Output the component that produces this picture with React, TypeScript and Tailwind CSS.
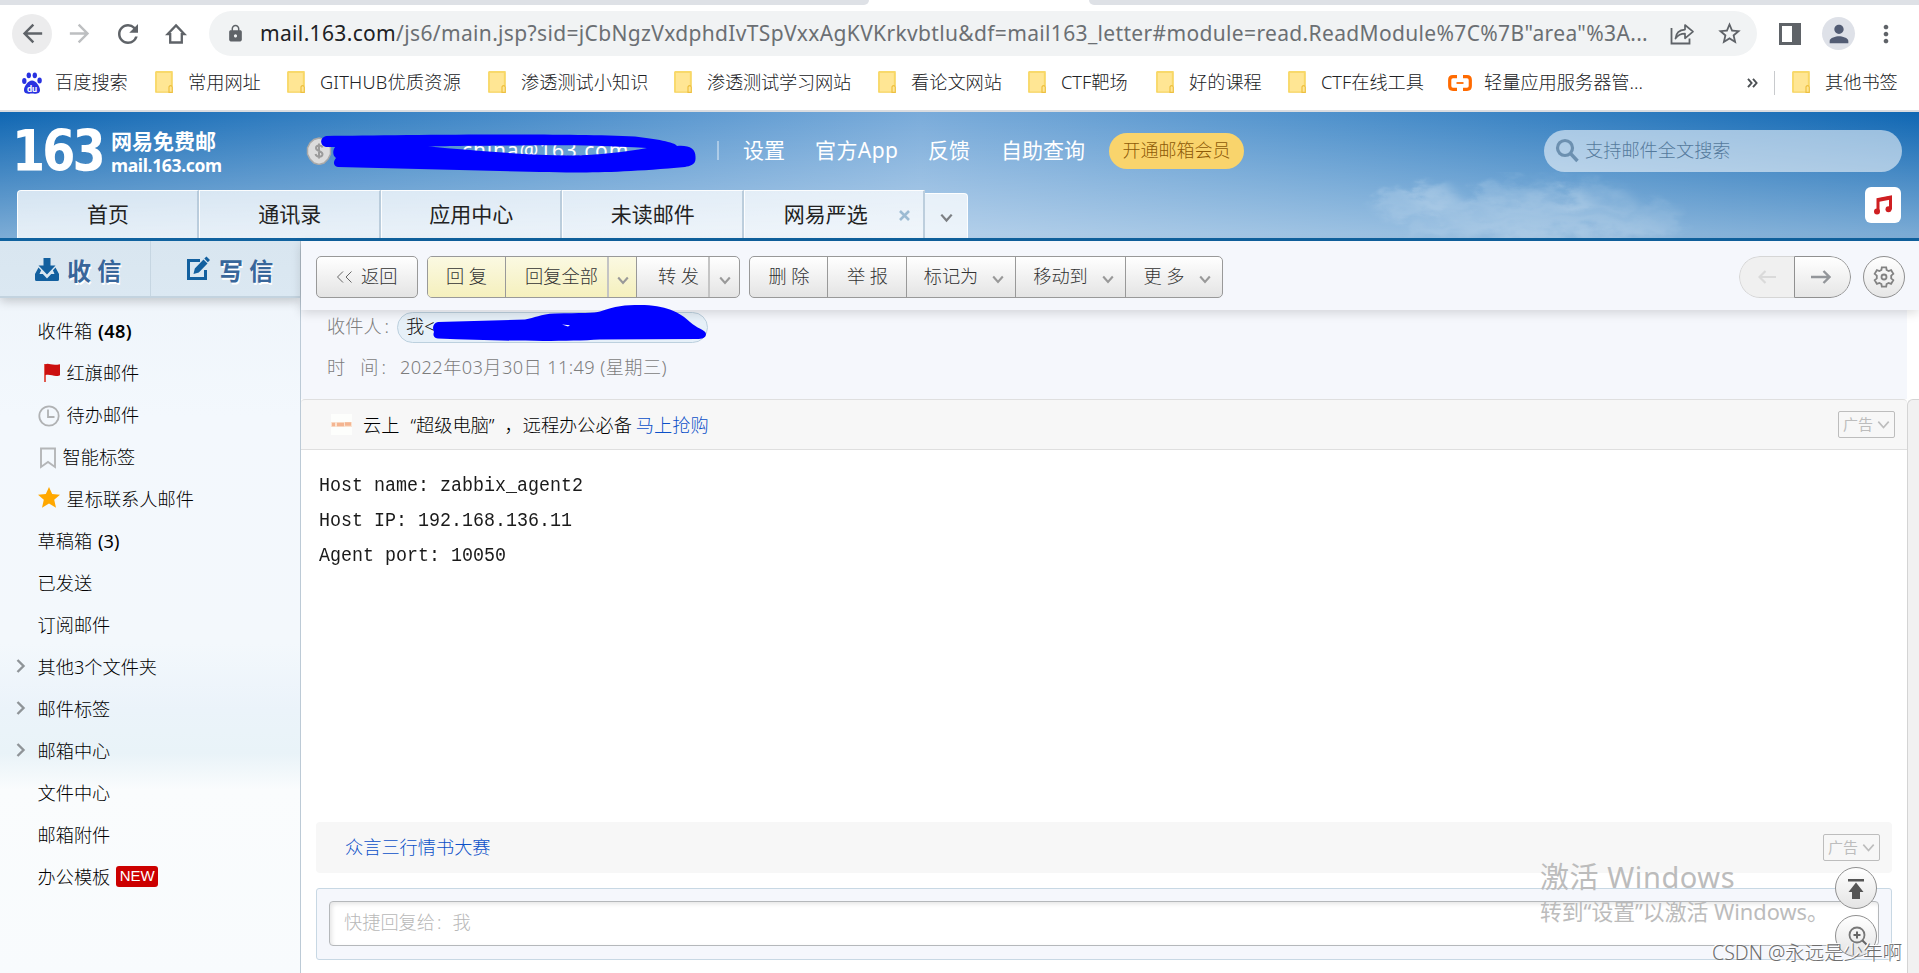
import React from "react";
import { MdArrowBack, MdArrowForward, MdRefresh, MdLock, MdStarBorder, MdPerson, MdMoreVert } from "react-icons/md";

const ui = "font-['Noto_Sans','Noto_Sans_CJK_SC',sans-serif]";

function Folder() {
  return (
    <svg width="18" height="22" viewBox="0 0 18 22" className="shrink-0">
      <path d="M1 1h16v14M1 1v20h13" fill="#ffe694" stroke="#f6d155" strokeWidth="1.4" />
      <path d="M1.5 1.5h15v19h-15z" fill="#ffe694" />
      <path d="M1 21V1h15.500v14" fill="none" stroke="#f8d866" strokeWidth="1.300" />
      <path d="M14 21.3v-5.5q1.6-2.4 3.3 0v5.5z" fill="#ffe694" stroke="#eec040" strokeWidth="1.2" />
    </svg>
  );
}

function Bookmark({ label, w, gap, track = "" }: { label: string; w: string; gap: string; track?: string }) {
  return (
    <div className={`flex shrink-0 items-center ${gap}`}>
      <Folder />
      <span className={`ml-[15px] whitespace-nowrap ${w} ${track}`}>{label}</span>
    </div>
  );
}

function Chevron({ className = "", color = "#999", size = 12, sw = 2.1 }: { className?: string; color?: string; size?: number; sw?: number }) {
  return (
    <svg width={size} height={size * 0.75} viewBox="0 0 12 9" className={`shrink-0 ${className}`}>
      <path d="M1.200 1.500l4.800 5.500 4.800-5.500" fill="none" stroke={color} strokeWidth={sw} />
    </svg>
  );
}

function BrowserBar() {
  return (
    <div className="h-[51px] flex items-center bg-white text-[#5f6368]">
      <div className="ml-3 flex h-10 w-10 shrink-0 items-center justify-center rounded-full bg-[#ececed]">
        <MdArrowBack size={29} />
      </div>
      <MdArrowForward size={29} className="ml-[13px] shrink-0 text-[#bdbfc1]" />
      <MdRefresh size={30} className="ml-[19px] shrink-0" />
      <svg width="22" height="22" viewBox="0 0 22 22" className="ml-[22px] shrink-0">
        <path d="M11 2.4l8.4 8.800h-2.600v8.300H5.200v-8.300H2.600z" fill="none" stroke="#5f6368" strokeWidth="2.300" />
      </svg>
      <div className="ml-[22px] flex h-[45px] w-[1548px] shrink-0 items-center rounded-full bg-[#f1f3f4]">
        <MdLock size={19} className="ml-[17px] shrink-0" />
        <span className="ml-[15px] w-[1388px] shrink-0 whitespace-nowrap text-[21px] font-normal tracking-[0.345px] text-[#6b6f73]">
          <span className="text-[#202124]">mail.163.com</span>
          {'/js6/main.jsp?sid=jCbNgzVxdphdIvTSpVxxAgKVKrkvbtlu&df=mail163_letter#module=read.ReadModule%7C%7B"area"%3A...'}
        </span>
        <svg width="26" height="24" viewBox="0 0 26 24" className="ml-[21px] shrink-0">
          <path d="M2.500 6v15.500h18v-5" fill="none" stroke="#5f6368" strokeWidth="1.800" />
          <path d="M6.500 16.500c.5-6 4-8.500 9.500-8.900V3l8 6.600-8 6.700v-4.600c-4.500 0-7 1.300-9.500 4.800z" fill="none" stroke="#5f6368" strokeWidth="1.700" strokeLinejoin="round" />
        </svg>
        <MdStarBorder size={27} className="ml-[21px] shrink-0" />
      </div>
      <svg width="22" height="22" viewBox="0 0 22 22" className="ml-[22px] shrink-0">
        <path d="M0 0h22v22H0zM3 3v16h10V3z" fill="#5f6368" fillRule="evenodd" />
      </svg>
      <div className="ml-[21px] flex h-[33px] w-[33px] shrink-0 items-center justify-center rounded-full bg-[#dee1e8] text-[#525c74]">
        <MdPerson size={28} />
      </div>
      <MdMoreVert size={28} className="ml-[17px] shrink-0" />
    </div>
  );
}

function BookmarksBar() {
  return (
    <div className="flex h-[54px] items-center border-b-2 border-[#dadce0] bg-white pb-[3px] text-[18.200px] text-[#202124]">
      <svg width="20" height="22" viewBox="0 0 20 22" className="ml-[22px] shrink-0">
        <g fill="#2932e1">
          <ellipse cx="2.300" cy="9" rx="2.200" ry="2.900" />
          <ellipse cx="6.800" cy="3.300" rx="2.200" ry="2.900" />
          <ellipse cx="12.800" cy="3.300" rx="2.200" ry="2.900" />
          <ellipse cx="17.600" cy="8.500" rx="2.200" ry="2.900" />
          <path d="M10 8.500c4 0 8 6 8 9.500s-3 4-8 3.600c-5 .4-8-.1-8-3.600s4-9.500 8-9.500z" />
        </g>
        <text x="10" y="19.500" textAnchor="middle" fontSize="9" fontWeight="700" fill="#fff" fontFamily="Roboto, sans-serif">du</text>
      </svg>
      <span className="ml-[13px] w-[73px] shrink-0 whitespace-nowrap">百度搜索</span>
      <Bookmark gap="ml-[27px]" w="w-[73px]" label="常用网址" />
      <Bookmark gap="ml-[26px]" w="w-[142px]" label="GITHUB优质资源" track="tracking-[0.2px]" />
      <Bookmark gap="ml-[26px]" w="w-[127px]" label="渗透测试小知识" />
      <Bookmark gap="ml-[26px]" w="w-[144px]" label="渗透测试学习网站" track="tracking-[-0.2px]" />
      <Bookmark gap="ml-[27px]" w="w-[90px]" label="看论文网站" />
      <Bookmark gap="ml-[27px]" w="w-[68px]" label="CTF靶场" />
      <Bookmark gap="ml-[27px]" w="w-[73px]" label="好的课程" />
      <Bookmark gap="ml-[26px]" w="w-[104px]" label="CTF在线工具" />
      <svg width="24" height="16" viewBox="0 0 24 16" className="ml-[23px] shrink-0">
        <path d="M9 1.700H5Q1.700 1.700 1.700 5v6q0 3.300 3.300 3.300h4M15 1.700h4q3.300 0 3.300 3.300v6q0 3.300-3.300 3.300h-4" fill="none" stroke="#ff6a00" strokeWidth="3.200" />
        <path d="M8.500 8h7" stroke="#ff6a00" strokeWidth="1.800" />
      </svg>
      <span className="ml-[12px] w-[161px] shrink-0 whitespace-nowrap">轻量应用服务器管...</span>
      <svg width="11" height="10" viewBox="0 0 11 10" className="ml-[102px] shrink-0">
        <path d="M1 .800l3.600 4.200L1 9.200M6 .800l3.600 4.200L6 9.200" fill="none" stroke="#4b4f53" strokeWidth="1.900" />
      </svg>
      <div className="ml-[16px] h-6 w-px bg-[#c8cacd]" />
      <Bookmark gap="ml-[17px]" w="w-[73px]" label="其他书签" />
    </div>
  );
}

function Clouds() {
  return (
    <svg width="580" height="90" viewBox="-40 0 580 90" className="absolute right-0 bottom-0">
      <defs>
        <filter id="cloud" x="-20%" y="-20%" width="140%" height="140%">
          <feGaussianBlur stdDeviation="5" result="b" />
          <feTurbulence type="fractalNoise" baseFrequency="0.03 0.06" numOctaves="4" seed="8" result="n" />
          <feDisplacementMap in="b" in2="n" scale="38" />
        </filter>
      </defs>
      <g fill="#fff" filter="url(#cloud)">
        <ellipse cx="45" cy="58" rx="50" ry="12" opacity=".17" />
        <ellipse cx="55" cy="48" rx="24" ry="12" opacity=".15" />
        <ellipse cx="150" cy="52" rx="62" ry="16" opacity=".15" />
        <ellipse cx="185" cy="68" rx="120" ry="17" opacity=".12" />
        <ellipse cx="165" cy="82" rx="140" ry="12" opacity=".13" />
        <ellipse cx="215" cy="50" rx="40" ry="14" opacity=".11" />
      </g>
    </svg>
  );
}

function Tab({ label, first = false, close = false }: { label: string; first?: boolean; close?: boolean }) {
  return (
    <div className={`relative flex h-12 shrink-0 items-center justify-center border-t border-l border-white/90 border-r-2 border-r-[#a9bfd0]/70 bg-linear-to-b from-white/75 to-white/80 ${first ? "w-[182px] rounded-tl" : "w-[181.500px]"}`}>
      <span className={close ? "mr-4" : "ml-px"}>{label}</span>
      {close && (
        <svg width="11" height="11" viewBox="0 0 11 11" className="absolute right-[13px] top-[19px]">
          <path d="M1 1l9 9M10 1l-9 9" stroke="#9cbbd3" strokeWidth="2.600" />
        </svg>
      )}
    </div>
  );
}

function Header() {
  return (
    <header className="relative flex h-[129px] flex-col justify-between border-b-[3px] border-[#10629f] bg-[linear-gradient(to_bottom,rgba(255,255,255,0),rgba(255,255,255,0.46)),linear-gradient(to_right,#1067b3,#4389c8_25%,#79abda_48%,#4d90cb_70%,#1067b3)] font-normal">
      <Clouds />
      <div className="relative flex h-[78px] items-center pt-[2px] text-[21px] text-white">
        <span className="ml-3 w-[92px] shrink-0 origin-left scale-x-[0.93] font-['DejaVu_Sans_Condensed','DejaVu_Sans',sans-serif] text-[57px] leading-[60px] font-bold tracking-[-0.055em]">163</span>
        <div className="ml-[7px] w-[112px] shrink-0 pt-1">
          <div className="text-[21px] leading-[25px] font-bold whitespace-nowrap">网易免费邮</div>
          <div className="text-[17.500px] leading-[22px] font-bold whitespace-nowrap tracking-[-0.02em]">mail.163.com</div>
        </div>
        <svg width="26" height="28" viewBox="0 0 26 28" className="ml-[83px] shrink-0">
          <path d="M13 1l5 1.500 4 3.500 2.500 5v6l-2.500 5-4 4-5 1.500L8 26l-4-4-2.500-5v-6L4 6l4-3.500z" fill="#dcdcdc" stroke="#a9a9a9" strokeWidth="1.500" />
          <path d="M16.500 10.500C16 8 10 7.500 10 11s6.500 2.800 6.500 6.200-6 3.300-7-.2M13 6.500v15" fill="none" stroke="#9b9b9b" strokeWidth="2" />
        </svg>
        <span className="ml-[130px] w-[255px] shrink-0 whitespace-nowrap tracking-[0.04em]">china@163.com</span>
        <div className="h-[19px] w-[2px] shrink-0 bg-white/40" />
        <span className="ml-6 w-[72px] shrink-0 whitespace-nowrap">设置</span>
        <span className="w-[113px] shrink-0 whitespace-nowrap tracking-[0.02em]">官方App</span>
        <span className="w-[73px] shrink-0">反馈</span>
        <span className="w-[108px] shrink-0 whitespace-nowrap">自助查询</span>
        <div className="flex h-9 w-[135px] shrink-0 items-center justify-center rounded-full bg-[#f9d46c] text-[18px] font-light text-[#8e5a08]">开通邮箱会员</div>
        <div className="ml-[300px] flex h-[42px] w-[358px] shrink-0 items-center rounded-full bg-white/55 text-[18.200px] font-light text-[#557a9c]">
          <svg width="25" height="25" viewBox="0 0 25 25" className="ml-[11px] shrink-0">
            <circle cx="10" cy="10" r="7.500" fill="none" stroke="#6c90b0" strokeWidth="3.200" />
            <path d="M15.500 15.500l7 7.500" stroke="#6c90b0" strokeWidth="3.400" />
          </svg>
          <span className="ml-[5px] whitespace-nowrap">支持邮件全文搜索</span>
        </div>
        <svg width="378" height="42" viewBox="319 133 378 42" className="absolute left-[319px] top-[21px]">
          <path fillRule="evenodd" fill="#0000ff" d="M326 136C400 135 560 133 635 136.500C655 139 675 142 677 146C690 145 696 149 695.500 158C696 165 690 166 685 167C620 173 580 173 540 172L338 167C333 166 333 162 336 158C332 155 333 150 335 147L326 147C320 146 319 138 326 136ZM428 146.500C470 150 520 155 570 155.500C600 155 625 152 647 148C600 145.500 570 145 520 145.500C490 145.500 450 146 428 146.500Z" />
        </svg>
      </div>
      <div className="relative flex items-end text-[21px] text-[#222]">
        <div className="w-[17px] shrink-0" />
        <Tab label="首页" first />
        <Tab label="通讯录" />
        <Tab label="应用中心" />
        <Tab label="未读邮件" />
        <Tab label="网易严选" close />
        <div className="flex h-[45px] w-[43px] items-center justify-center rounded-tr border-t border-r border-white/90 bg-white/75">
          <Chevron size={13} color="#7c7f83" className="mt-1" />
        </div>
        <div className="mr-[18px] mb-[15px] ml-auto flex h-9 w-9 items-center justify-center rounded-md bg-white">
          <svg width="20" height="20" viewBox="0 0 20 20">
            <path d="M5 16.500V4.500L17.500 2v12.500" fill="none" stroke="#cf1f22" strokeWidth="3" />
            <path d="M5 3.500l13-2.500v3.500L5 7z" fill="#cf1f22" />
            <circle cx="4" cy="16.500" r="3" fill="#cf1f22" />
            <circle cx="15.500" cy="14.300" r="3" fill="#cf1f22" />
          </svg>
        </div>
      </div>
    </header>
  );
}

function FolderRow({ label, icon, pad = "", arrow = false, children }: { label?: string; icon?: React.ReactNode; pad?: string; arrow?: boolean; children?: React.ReactNode }) {
  return (
    <li className="flex h-[42.050px] items-center whitespace-nowrap">
      <span className="flex w-[37.500px] shrink-0 items-center pl-4">
        {arrow && (
          <svg width="10" height="14" viewBox="0 0 10 14" className="-mt-1">
            <path d="M1.500 1l6 6-6 6" fill="none" stroke="#8f9498" strokeWidth="2.400" />
          </svg>
        )}
      </span>
      {icon}
      <span className={pad}>{label}</span>
      {children}
    </li>
  );
}

function Sidebar() {
  return (
    <aside className="flex w-[301px] shrink-0 flex-col border-r border-[#bccad6] bg-[linear-gradient(to_bottom,#eef4fa,#f3f8fd_24%,#f3f8fc_55%,#ebf3fa_64%,#e9f3f8_70%,#fafcfd_75%,#f8fbfd)]">
      <div className="flex h-[57px] shrink-0 border-b-2 border-[#c3d3df] bg-linear-to-b from-[#d9e6f0] to-[#dbe8f2] text-[24px] font-bold text-[#38669a] shadow-[0_3px_10px_rgba(0,0,0,0.2)] [text-shadow:1px_2px_0_#fff]">
        <div className="flex w-[151px] items-center border-r border-[#c6d6e2] pt-1">
          <svg width="26" height="24" viewBox="0 0 26 24" className="-mt-0.5 ml-[34px] shrink-0">
            <path d="M9.500 0h7v7.500h5L13 16.500 4.500 7.500h5z" fill="#13609f" />
            <path d="M4.500 9.500L1 16v5.500Q1 23 2.500 23h21q1.500 0 1.500-1.500V16l-3.500-6.500-2.600 2.700 1.600 3.800h-3.300L13 20.500 8.800 16H5.500l1.600-3.800z" fill="#13609f" />
          </svg>
          <span className="ml-[7px] whitespace-nowrap">收 信</span>
        </div>
        <div className="flex items-center pt-1">
          <svg width="24" height="25" viewBox="0 0 24 25" className="ml-[35px] -mt-1 shrink-0">
            <path d="M14 4.500H2.500v18h17V14" fill="none" stroke="#13609f" strokeWidth="3" />
            <path d="M7.500 18l1.300-5.500L17.500 3.500l4 4-8.700 9zM18.300 2.600L20.500.500l3.500 3.600-2.200 2.200z" fill="#13609f" />
          </svg>
          <span className="ml-[9px] whitespace-nowrap">写 信</span>
        </div>
      </div>
      <ul className="pt-[12.500px] text-[18.200px] text-black">
        <FolderRow label="收件箱"><b className="ml-[6px] font-semibold tracking-[0.02em]">(48)</b></FolderRow>
        <FolderRow label="红旗邮件" pad="ml-[7px]" icon={
          <svg width="22" height="20" viewBox="0 0 22 20" className="mt-[-2px]">
            <path d="M6 1h2v18H6z" fill="#e05a50" />
            <path d="M7 1.500c4-2 6 1.500 15-.3v11c-6 2.500-9-1.700-15 0z" fill="#cc1010" />
          </svg>} />
        <FolderRow label="待办邮件" pad="ml-[7px]" icon={
          <svg width="22" height="22" viewBox="0 0 22 22">
            <circle cx="11" cy="11" r="9.700" fill="none" stroke="#b0b2b4" strokeWidth="1.800" />
            <path d="M10 4.500V12h6.500" fill="none" stroke="#b0b2b4" strokeWidth="1.800" />
          </svg>} />
        <FolderRow label="智能标签" pad="ml-[7px]" icon={
          <svg width="18" height="22" viewBox="0 0 18 22">
            <path d="M3 1.500h14V20l-7-5-7 5z" fill="none" stroke="#b4b6b8" strokeWidth="1.900" />
          </svg>} />
        <FolderRow label="星标联系人邮件" pad="ml-[7px]" icon={
          <svg width="22" height="21" viewBox="0 0 22 21" className="-mt-1">
            <path d="M11 0l3.200 7 7.800.800-5.800 5 1.800 8-7-4.200-7 4.200 1.800-8L0 7.800 7.800 7z" fill="#ffa800" />
          </svg>} />
        <FolderRow label="草稿箱"><span className="ml-[6px] font-normal">(3)</span></FolderRow>
        <FolderRow label="已发送" />
        <FolderRow label="订阅邮件" />
        <FolderRow label="其他3个文件夹" arrow />
        <FolderRow label="邮件标签" arrow />
        <FolderRow label="邮箱中心" arrow />
        <FolderRow label="文件中心" />
        <FolderRow label="邮箱附件" />
        <FolderRow label="办公模板">
          <span className="ml-[6px] -mt-1 flex h-[21px] w-[42px] items-center justify-center rounded-[3px] bg-[#cc0000] font-['Liberation_Sans',sans-serif] text-[15px] text-white">NEW</span>
        </FolderRow>
      </ul>
    </aside>
  );
}

function Btn({ label, w, yellow = false, sep = true, className = "", arrow = false }: { label: string; w: string; yellow?: boolean; sep?: boolean; className?: string; arrow?: boolean }) {
  return (
    <div className={`flex shrink-0 items-center justify-center whitespace-nowrap ${w} ${sep ? "border-r border-[#999]" : ""} ${yellow ? "bg-linear-to-b from-[#fbf9e2] to-[#f5f0bd]" : ""} ${className}`}>
      {label}
      {arrow && <Chevron className="mt-1 ml-[14px]" />}
    </div>
  );
}

function Split({ w, yellow = false, sep = true }: { w: string; yellow?: boolean; sep?: boolean }) {
  return (
    <div className={`flex shrink-0 items-center justify-center border-l-2 border-l-[#c4c4c4] ${w} ${sep ? "border-r border-r-[#999]" : ""} ${yellow ? "bg-linear-to-b from-[#fbf9e2] to-[#f5f0bd]" : ""}`}>
      <Chevron className="mt-[6px]" />
    </div>
  );
}

const group = "flex h-[42px] shrink-0 overflow-hidden rounded-[5px] border border-[#999] bg-linear-to-b from-white to-[#e4e4e4]";

function Toolbar() {
  return (
    <div className="relative flex h-[69px] shrink-0 items-start bg-[#f5f7fc] pt-[15px] text-[18.200px] text-[#333] shadow-[0_3px_10px_rgba(0,0,0,0.14)]">
      <div className={`${group} ml-[15px] w-[102px] items-center`}>
        <svg width="17" height="12" viewBox="0 0 17 12" className="ml-[19px]">
          <path d="M7 .500L1.500 6 7 11.500M15.500.500L10 6l5.500 5.500" fill="none" stroke="#666" strokeWidth="1" />
        </svg>
        <span className="ml-2">返回</span>
      </div>
      <div className={`${group} ml-[9px] w-[313px]`}>
        <Btn label="回 复" w="w-[78px]" yellow />
        <Btn label="回复全部" w="w-[101px]" yellow sep={false} className="pl-2.5" />
        <Split w="w-[30px]" yellow />
        <Btn label="转 发" w="w-[71px]" sep={false} className="pl-3" />
        <Split w="w-[31px]" sep={false} />
      </div>
      <div className={`${group} ml-[9px] w-[474px]`}>
        <Btn label="删 除" w="w-[78px]" className="pl-px" />
        <Btn label="举 报" w="w-[79px]" className="pl-px" />
        <Btn label="标记为" w="w-[109px]" arrow className="pl-1.5" />
        <Btn label="移动到" w="w-[110px]" arrow className="pl-1.5" />
        <Btn label="更 多" w="w-[96px]" arrow sep={false} className="pl-1.5" />
      </div>
      <div className="ml-auto flex h-[42px] w-[112px] overflow-hidden rounded-full">
        <div className="flex w-[55px] items-center justify-center rounded-l-full border border-r-0 border-[#d6d6d6] bg-[#f0f0f0]">
          <svg width="18" height="14" viewBox="0 0 18 14"><path d="M18 7H2M7.500 1l-6 6 6 6" fill="none" stroke="#dadada" strokeWidth="2.200" /></svg>
        </div>
        <div className="flex w-[57px] items-center justify-center rounded-r-full border border-[#909090] bg-linear-to-b from-white to-[#e6e6e6]">
          <svg width="20" height="14" viewBox="0 0 20 14" className="mr-[3px]"><path d="M0 7h18M12.500 1l6 6-6 6" fill="none" stroke="#93969a" strokeWidth="2.400" /></svg>
        </div>
      </div>
      <div className="mr-[14px] ml-3 flex h-[42px] w-[42px] items-center justify-center rounded-full border border-[#909090] bg-linear-to-b from-white to-[#e6e6e6]">
        <svg width="22" height="22" viewBox="0 0 22 22">
          <path d="M8.800 1.300h4.400l.4 2.700 2 1.100 2.500-1 2.200 3.800-2.100 1.700v2.800l2.100 1.700-2.200 3.800-2.500-1-2 1.100-.4 2.700H8.800L8.400 18l-2-1.100-2.500 1-2.200-3.800 2.100-1.700V9.600L1.700 7.900l2.200-3.800 2.500 1 2-1.100z" fill="none" stroke="#828282" strokeWidth="1.800" />
          <circle cx="11" cy="11" r="2.500" fill="none" stroke="#828282" strokeWidth="1.800" />
        </svg>
      </div>
    </div>
  );
}

function AdBadge({ className = "" }: { className?: string }) {
  return (
    <div className={`ml-auto flex h-[27px] w-[57px] items-center rounded-[2px] border-[1.500px] border-[#bdbdbd] pl-1 text-[15px] font-normal text-[#bdbdbd] ${className}`}>
      <span className="whitespace-nowrap">广告</span>
      <Chevron size={13} sw={1.500} color="#bdbdbd" className="ml-1" />
    </div>
  );
}

function Mail() {
  return (
    <div className="flex min-h-0 flex-1">
      <div className="flex w-[1606px] shrink-0 flex-col bg-white">
        <div className="h-[89px] shrink-0 bg-[#f5f7fc] text-[18.200px] text-[#7d7d7d]">
          <div className="flex h-[34px] items-center pl-[26px]">
            <span className="w-[70px] whitespace-nowrap">收件人<span className="ml-[3px]">:</span></span>
            <div className="flex h-[31px] w-[311px] items-center rounded-full border border-[#bcd0de] bg-[#e6f0f8] pl-[8px] text-[#111]">我&lt;</div>
          </div>
          <div className="flex h-[48px] items-center pl-[26px]">
            <span className="w-[73px] whitespace-pre">时<span className="ml-[15px]">间<span className="ml-[3px]">:</span></span></span>
            <span className="tracking-[0.4px] whitespace-nowrap">2022年03月30日 11:49 (星期三)</span>
          </div>
        </div>
        <div className="flex h-[51px] shrink-0 items-center rounded-t border-y border-[#dfdfdf] bg-[#f7f7f7] text-[18.200px] text-black">
          <svg width="21" height="21" viewBox="0 0 21 21" className="ml-[30px] shrink-0">
            <path d="M0 0h21v21H0z" fill="#fdfefc" />
            <path d="M1 10.500h3M6 10.500h7M14 10h6" stroke="#f0a27a" strokeWidth="3.500" />
            <path d="M0 10.500h21" stroke="#f8c9a8" strokeWidth="5" opacity=".5" />
          </svg>
          <span className="mt-0.5 ml-[11px] whitespace-nowrap">云上<span className="ml-[11px]">“超级电脑”</span><span className="ml-[10px]">，</span>远程办公必备</span>
          <span className="mt-0.5 ml-1 whitespace-nowrap text-[#0b50c8]">马上抢购</span>
          <AdBadge className="mr-3" />
        </div>
        <div className="h-[372px] shrink-0 pt-[18px] pl-[18px] font-['Liberation_Mono',monospace] text-[18.330px] leading-[35px] whitespace-pre text-[#1a1a1a]">
          <div className="scale-y-[1.13]">Host name: zabbix_agent2</div>
          <div className="scale-y-[1.13]">Host IP: 192.168.136.11</div>
          <div className="scale-y-[1.13]">Agent port: 10050</div>
        </div>
        <div className="mr-[15px] ml-[15px] flex h-[51px] shrink-0 items-center rounded bg-[#f7f7f7] pl-[29px] text-[18.200px] text-[#0b50c8]">
          众言三行情书大赛
          <AdBadge className="mr-3" />
        </div>
        <div className="mx-[15px] mt-[15px] h-[72px] shrink-0 rounded-[3px] border border-[#c8d8e4] bg-[#f5f7fc] p-3">
          <div className="flex h-[45px] items-center rounded border border-[#b5b8bb] bg-white pb-px pl-[14px] text-[18.200px] text-[#b8b8b8] shadow-[inset_2px_2px_4px_rgba(0,0,0,0.1)]">快捷回复给<span className="ml-[2px]">:</span><span className="ml-[11px]">我</span></div>
        </div>
      </div>
      <div className="mt-[89px] flex-1 rounded-tl-md border-l border-t border-[#d4d4d4] bg-[#f1f1f1]" />
    </div>
  );
}

function Overlays() {
  return (
    <>
      <svg width="276" height="38" viewBox="432 304 276 38" className="absolute top-[304px] left-[432px] z-20">
        <path fill="#0000ff" d="M438 322L525 319.500C535 318 540 314 555 313.500C580 313 595 313 600 311.500C615 306 625 305 640 305C665 305 680 312 690 322C696 328 706 330 706 334C706 338 702 339 697 339L600 339.500C560 342 500 341 438 338.500C433 338 433 334 434 332C432 328 433 323 438 322Z" />
        <path d="M562 324.500l8 .8-2 1.200z" fill="#fff" />
      </svg>
      <div className="absolute top-[867px] left-[1835px] flex h-[42px] w-[42px] items-center justify-center rounded-full border border-[#909090] bg-linear-to-b from-white to-[#e4e4e4]">
        <svg width="16" height="20" viewBox="0 0 16 20" className="mt-0.5"><path d="M0 0h16v2.500H0zM8 3.500l7.500 9.500H12v7H4v-7H.500z" fill="#555" /></svg>
      </div>
      <div className="absolute top-[915px] left-[1835px] flex h-[42px] w-[42px] items-center justify-center rounded-full border border-[#909090] bg-linear-to-b from-white to-[#e4e4e4]">
        <svg width="20" height="20" viewBox="0 0 20 20" className="ml-1"><circle cx="9" cy="9" r="7.500" fill="none" stroke="#777" strokeWidth="1.800" /><path d="M9 5.500v7M5.500 9h7M14.500 14.500l4 4" stroke="#666" strokeWidth="2" /></svg>
      </div>
      <div className="absolute top-[857px] left-[1540px] text-[29px] leading-[40px] font-normal tracking-[0.02em] whitespace-nowrap text-[#bcbcbc]">激活 Windows</div>
      <div className="absolute top-[897px] left-[1540px] text-[21.800px] leading-[30px] font-normal whitespace-nowrap text-[#bcbcbc]">转到“设置”以激活 Windows。</div>
      <div className="absolute top-[939px] left-[1712px] text-[19.500px] leading-[28px] whitespace-nowrap text-[#6d6d6d] [text-shadow:-1px_-1px_0_#fff]">CSDN @永远是少年啊</div>
    </>
  );
}

export default function App() {
  return (
    <div className={`relative flex h-[973px] w-[1919px] flex-col overflow-hidden bg-white font-light ${ui}`}>
      <div className="flex h-[5px] shrink-0 justify-between">
        <div className="w-[869px] rounded-br-md bg-[#dee1e6]" />
        <div className="w-[830px] rounded-bl-md bg-[#dee1e6]" />
      </div>
      <div className="shrink-0 pt-[3px]"><BrowserBar /></div>
      <div className="shrink-0 -mt-[1px]"><BookmarksBar /></div>
      <Header />
      <div className="flex min-h-0 flex-1">
        <Sidebar />
        <main className="flex min-w-0 flex-1 flex-col">
          <div className="relative z-10"><Toolbar /></div>
          <Mail />
        </main>
      </div>
      <Overlays />
    </div>
  );
}
